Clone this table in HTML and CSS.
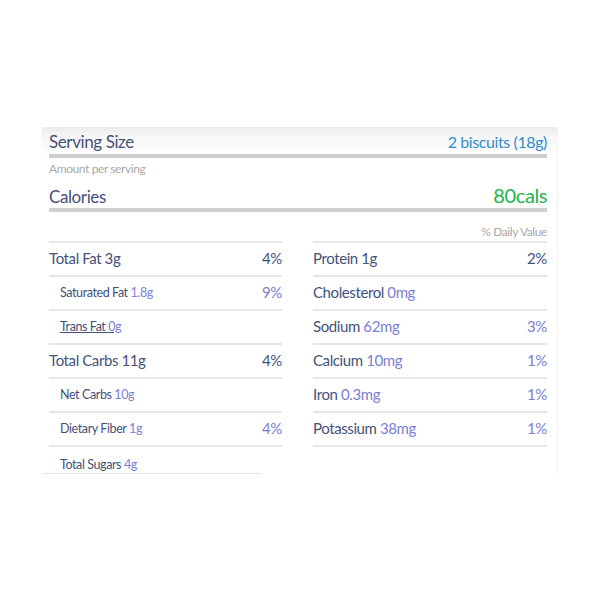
FILE: index.html
```html
<!DOCTYPE html>
<html>
<head>
<meta charset="utf-8">
<link rel="stylesheet" href="styles.css">
</head>
<body>
<div class="card">
  <div class="head-row">
    <span class="title">Serving Size</span>
    <span class="serving">2 biscuits (18g)</span>
  </div>
  <div class="bar"></div>
  <div class="amount">Amount per serving</div>
  <div class="cal-row">
    <span class="title">Calories</span>
    <span class="cals">80cals</span>
  </div>
  <div class="bar bar-cal"></div>
  <div class="dv">% Daily Value</div>
  <div class="cols">
    <div class="col">
      <div class="row main"><span>Total Fat 3g</span><span>4%</span></div>
      <div class="row sub"><span>Saturated Fat <em>1.8g</em></span><span class="pct">9%</span></div>
      <div class="row sub"><span class="u">Trans Fat <em>0g</em></span></div>
      <div class="row main"><span>Total Carbs 11g</span><span>4%</span></div>
      <div class="row sub"><span>Net Carbs <em>10g</em></span></div>
      <div class="row sub"><span>Dietary Fiber <em>1g</em></span><span class="pct">4%</span></div>
      <div class="row sub last"><span>Total Sugars <em>4g</em></span></div>
    </div>
    <div class="col">
      <div class="row main"><span>Protein 1g</span><span>2%</span></div>
      <div class="row main"><span>Cholesterol <em>0mg</em></span></div>
      <div class="row main"><span>Sodium <em>62mg</em></span><span class="pct">3%</span></div>
      <div class="row main"><span>Calcium <em>10mg</em></span><span class="pct">1%</span></div>
      <div class="row main"><span>Iron <em>0.3mg</em></span><span class="pct">1%</span></div>
      <div class="row main bottom"><span>Potassium <em>38mg</em></span><span class="pct">1%</span></div>
    </div>
  </div>
  <div class="foot"></div>
</div>
</body>
</html>
```
FILE: styles.css
```css
html, body {
  margin: 0;
  padding: 0;
  background: #fff;
}
body {
  font-family: Lato, "Open Sans", sans-serif;
  color: #44527a;
  letter-spacing: -0.4px;
}
.card {
  margin: 127px 0 0 42px;
  width: 498px;
  padding: 5px 10px 0 7px;
  background: linear-gradient(#ececec 0px, #f7f7f7 10px, #fff 30px);
  border-right: 1px solid #f4f4f4;
}
.head-row, .cal-row {
  display: flex;
  justify-content: space-between;
  align-items: baseline;
}
.head-row {
  height: 20px;
  line-height: 20px;
}
.title {
  font-size: 17px;
  color: #44527a;
}
.serving {
  font-size: 16px;
  color: #2f8bcf;
}
.bar {
  height: 4px;
  background: #cfcfcf;
  margin-top: 2px;
}
.amount {
  font-size: 12px;
  color: #a9a9a9;
  line-height: 16px;
  margin-top: 3px;
}
.cal-row {
  margin-top: 7px;
  height: 22px;
  line-height: 22px;
}
.cals {
  font-size: 20px;
  color: #22b34c;
}
.bar-cal {
  margin-top: 2px;
}
.dv {
  text-align: right;
  font-size: 12px;
  color: #a9a9a9;
  line-height: 16px;
  margin-top: 12px;
}
.cols {
  display: grid;
  grid-template-columns: 233px 234px;
  column-gap: 31px;
  margin-top: 1px;
}
.row {
  display: flex;
  justify-content: space-between;
  align-items: center;
  border-top: 2px solid #e6e6e6;
  height: 30px;
  padding-bottom: 2px;
}
.row.bottom {
  border-bottom: 2px solid #e6e6e6;
}
.row.main {
  font-size: 15px;
}
.row.sub {
  font-size: 12.5px;
  padding-left: 11px;
}
.row.sub .pct, .row .pct {
  font-size: 15px;
  color: #7b80d4;
}
.row em {
  font-style: normal;
  color: #7b80d4;
}
.u {
  text-decoration: underline;
}
.row.last {
  height: 25px;
  padding-bottom: 1px;
  align-items: flex-end;
}
.foot {
  width: 220px;
  margin-left: -7px;
  border-top: 1px solid #e8e8e8;
}
```
